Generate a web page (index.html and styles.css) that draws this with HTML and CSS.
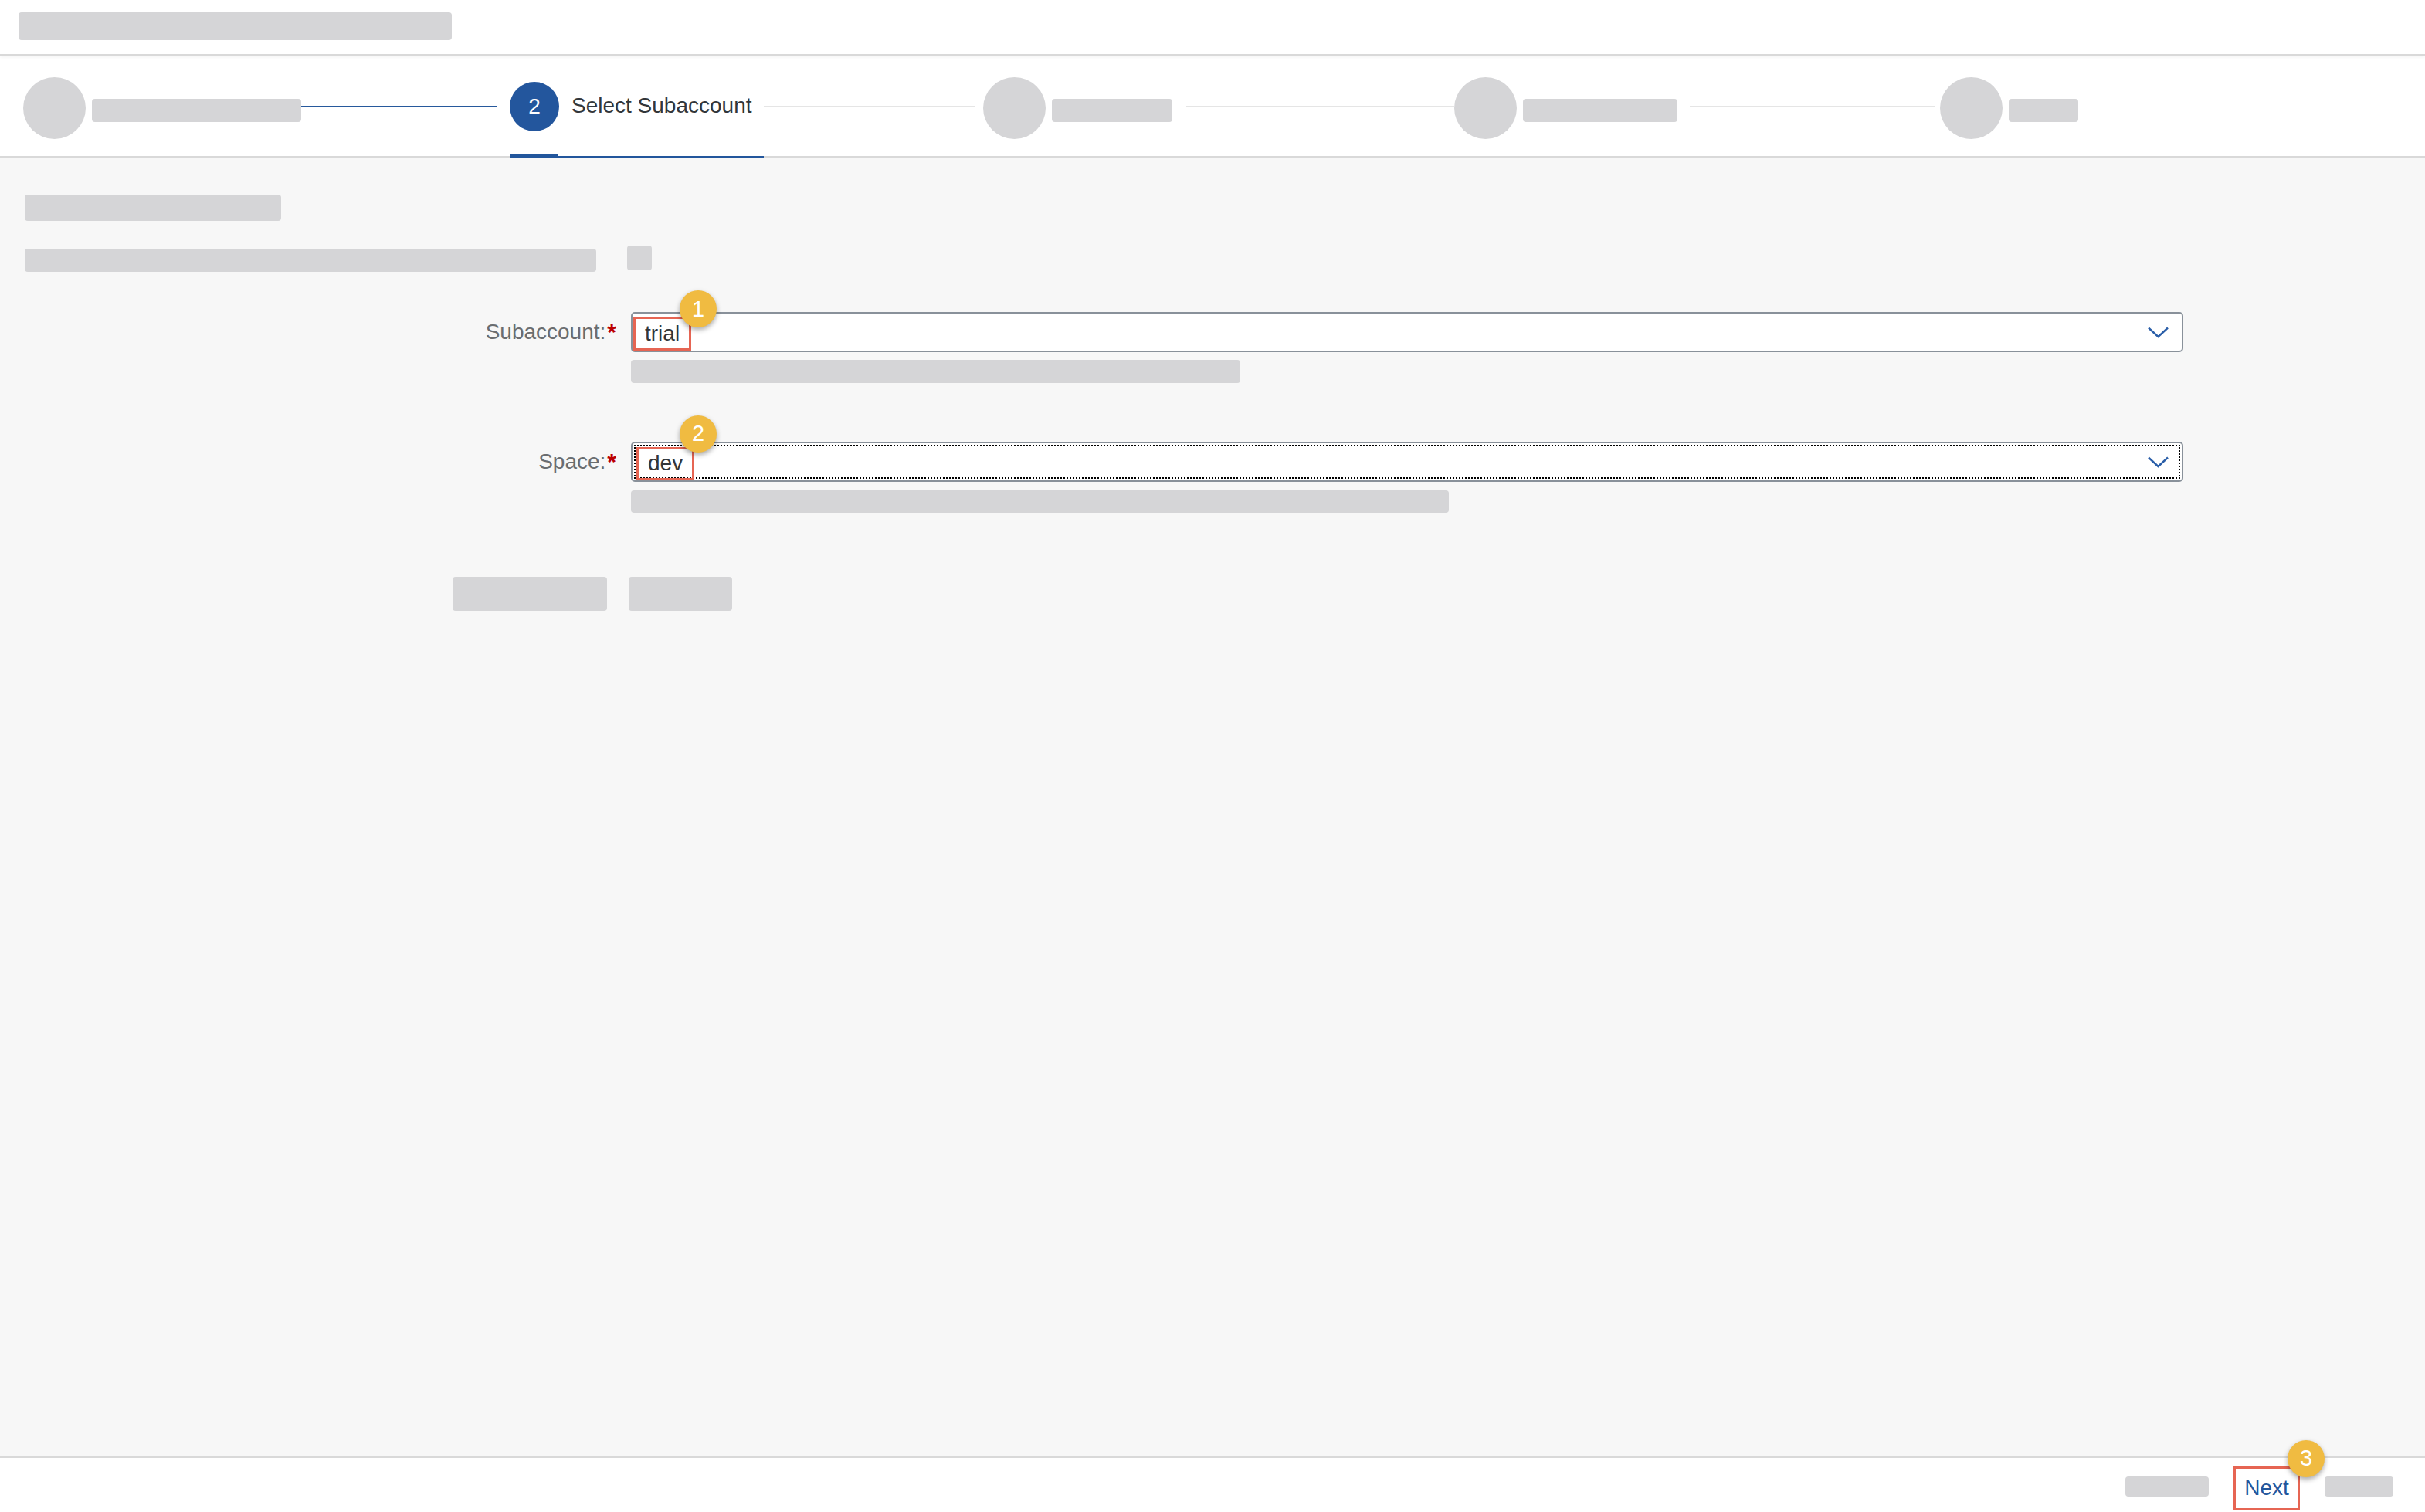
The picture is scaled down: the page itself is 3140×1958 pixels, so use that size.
FILE: index.html
```html
<!DOCTYPE html>
<html lang="en">
<head>
<meta charset="utf-8">
<title>Wizard - Select Subaccount</title>
<link rel="stylesheet" href="styles.css">
</head>
<body>
  <header class="topbar">
    <span class="skel topbar-skel"></span>
  </header>

  <nav class="wizard">
    <div class="step step-1">
      <span class="dot-skel"></span>
      <span class="skel step-label lab-1"></span>
      <span class="line line-done line-first"></span>
    </div>
    <div class="step step-2">
      <span class="step-head">
        <span class="num">2</span>
        <span class="step-title">Select Subaccount</span>
      </span>
      <span class="line line-after-active"></span>
    </div>
    <div class="step step-3">
      <span class="dot-skel"></span>
      <span class="skel step-label lab-3"></span>
      <span class="line line-3"></span>
    </div>
    <div class="step step-4">
      <span class="dot-skel"></span>
      <span class="skel step-label lab-4"></span>
      <span class="line line-4"></span>
    </div>
    <div class="step step-5">
      <span class="dot-skel"></span>
      <span class="skel step-label lab-5"></span>
    </div>
  </nav>

  <main class="content">
    <div class="skel title-skel"></div>
    <div class="desc-row">
      <span class="skel desc-skel"></span>
      <span class="skel sq-skel"></span>
    </div>

    <div class="form">
      <div class="label">Subaccount:<span class="req">*</span></div>
      <div class="field">
        <div class="select">
          <div class="select-inner">
            <span class="mark mark-1"><span class="value">trial</span><span class="badge badge-1">1</span></span>
            <svg class="chevron" width="27" height="15" viewBox="0 0 27 15"><polyline points="1,1.5 13.5,13 26,1.5" fill="none" stroke="#2a5ea8" stroke-width="2.4"/></svg>
          </div>
        </div>
        <span class="skel hint hint-1"></span>
      </div>

      <div class="label">Space:<span class="req">*</span></div>
      <div class="field">
        <div class="select">
          <div class="select-inner focused">
            <span class="mark mark-2"><span class="value">dev</span><span class="badge badge-2">2</span></span>
            <svg class="chevron" width="27" height="15" viewBox="0 0 27 15"><polyline points="1,1.5 13.5,13 26,1.5" fill="none" stroke="#2a5ea8" stroke-width="2.4"/></svg>
          </div>
        </div>
        <span class="skel hint hint-2"></span>
      </div>
    </div>

    <div class="btn-row">
      <span class="skel btn-skel btn-a"></span>
      <span class="skel btn-skel btn-b"></span>
    </div>
  </main>

  <footer class="footer">
    <span class="skel foot-skel foot-a"></span>
    <span class="next-box"><span class="next">Next</span><span class="badge badge-3">3</span></span>
    <span class="skel foot-skel foot-b"></span>
  </footer>
</body>
</html>
```

FILE: styles.css
```css
* { box-sizing: border-box; }

html, body { margin: 0; padding: 0; }

body {
  width: 3140px;
  height: 1958px;
  overflow: hidden;
  display: flex;
  flex-direction: column;
  font-family: "Liberation Sans", Arial, sans-serif;
  background: #ffffff;
  color: #32363a;
}

.skel {
  display: block;
  background: #d5d5d7;
  border-radius: 4px;
  flex: none;
}

/* Top bar */
.topbar {
  height: 72px;
  flex: none;
  padding: 16px 24px 0;
  background: #fff;
  border-bottom: 2px solid #d9d9d9;
  position: relative;
  z-index: 1;
  box-shadow: 0 2px 4px rgba(0, 0, 0, 0.05);
}
.topbar-skel { width: 561px; height: 36px; }

/* Wizard header */
.wizard {
  height: 132px;
  flex: none;
  display: grid;
  grid-template-columns: 630px 613px 610px 629px 1fr;
  padding-left: 30px;
  background: #fff;
  box-shadow: inset 0 -2px 0 #d9d9d9;
}
.step {
  display: flex;
  align-items: center;
  min-width: 0;
}
.dot-skel {
  width: 81px;
  height: 80px;
  border-radius: 50%;
  background: #d5d5d7;
  flex: none;
  margin-top: 4px;
}
.step-label {
  height: 30px;
  margin-left: 8px;
  margin-top: 10px;
}
.lab-1 { width: 271px; }
.lab-3 { width: 156px; }
.lab-4 { width: 200px; }
.lab-5 { width: 90px; }

.line {
  flex: 1;
  height: 2px;
  background: #e5e5e5;
  margin: 0 8px 0 16px;
}
.line-done { background: #27599c; }
.line-first { margin: 0 16px 0 0; }
.line-after-active { margin: 0 10px 0 0; }
.line-3 { margin: 0 0 0 18px; }
.line-4 { margin: 0 7px 0 16px; }

.step-head {
  align-self: stretch;
  display: flex;
  align-items: center;
  padding-right: 15px;
  border-bottom: 2px solid #22569c;
  position: relative;
}
.step-head::after {
  content: "";
  position: absolute;
  left: 0;
  bottom: -2px;
  width: 62px;
  height: 4px;
  background: #22569c;
}
.num {
  width: 64px;
  height: 64px;
  border-radius: 50%;
  background: #23569d;
  color: #fff;
  font-size: 28px;
  display: flex;
  align-items: center;
  justify-content: center;
  flex: none;
  margin-top: 2px;
}
.step-title {
  margin-left: 16px;
  font-size: 28px;
  color: #32363a;
  white-space: nowrap;
}

/* Content */
.content {
  flex: 1;
  background: #f7f7f7;
  padding: 48px 32px 0;
}
.title-skel { width: 332px; height: 34px; }
.desc-row {
  display: flex;
  align-items: flex-start;
  gap: 40px;
  margin-top: 32px;
}
.desc-skel { width: 740px; height: 30px; margin-top: 4px; }
.sq-skel { width: 32px; height: 32px; }

.form {
  display: grid;
  grid-template-columns: 766px 2010px;
  column-gap: 19px;
  row-gap: 76px;
  margin-top: 52px;
}
.label {
  height: 52px;
  display: flex;
  align-items: center;
  justify-content: flex-end;
  font-size: 28px;
  color: #6a6d70;
  white-space: nowrap;
}
.req {
  color: #bb0000;
  margin-left: 2px;
  font-weight: bold;
  font-size: 30px;
}
.field { display: flex; flex-direction: column; }

.select {
  height: 52px;
  border: 2px solid #89919a;
  border-radius: 5px;
  background: #fff;
  padding: 2px;
}
.select-inner {
  height: 100%;
  border: 2px solid transparent;
  display: flex;
  align-items: center;
  justify-content: space-between;
  padding-right: 13px;
}
.select-inner.focused {
  border: 2px dotted #000;
}
.mark {
  position: relative;
  height: 44px;
  border: 3px solid #e66553;
  padding: 0 12px;
  display: flex;
  align-items: center;
}
.mark-1 { margin-left: -3px; margin-top: 4px; }
.mark-2 { margin-left: 1px; margin-top: 4px; height: 43px; }
.value {
  font-size: 28px;
  color: #32363a;
  line-height: 1;
}
.chevron { display: block; flex: none; }

.badge {
  position: absolute;
  width: 48px;
  height: 48px;
  border-radius: 50%;
  background: #f0bb41;
  color: #fff;
  font-size: 29px;
  display: flex;
  align-items: center;
  justify-content: center;
  box-shadow: 0 3px 6px rgba(0, 0, 0, 0.35);
}
.badge-1 { left: 57px; top: -37px; }
.badge-2 { left: 53px; top: -44px; }
.badge-3 { left: 67px; top: -37px; }

.hint { height: 30px; margin-top: 10px; }
.hint-1 { width: 789px; }
.hint-2 { width: 1059px; height: 29px; margin-top: 11px; }

.btn-row {
  display: flex;
  gap: 28px;
  margin-top: 83px;
  padding-left: 554px;
}
.btn-skel { height: 44px; }
.btn-a { width: 200px; }
.btn-b { width: 134px; }

/* Footer */
.footer {
  height: 72px;
  flex: none;
  border-top: 2px solid #d9d9d9;
  background: #fff;
  display: flex;
  justify-content: flex-end;
  align-items: center;
  gap: 32px;
  padding-right: 41px;
}
.foot-skel { height: 26px; margin-top: 4px; }
.foot-a { width: 108px; }
.foot-b { width: 89px; }
.next-box {
  position: relative;
  width: 86px;
  height: 57px;
  border: 3px solid #e66553;
  display: flex;
  align-items: center;
  justify-content: center;
  margin-top: 8px;
}
.next {
  font-size: 28px;
  color: #22569c;
}
```
